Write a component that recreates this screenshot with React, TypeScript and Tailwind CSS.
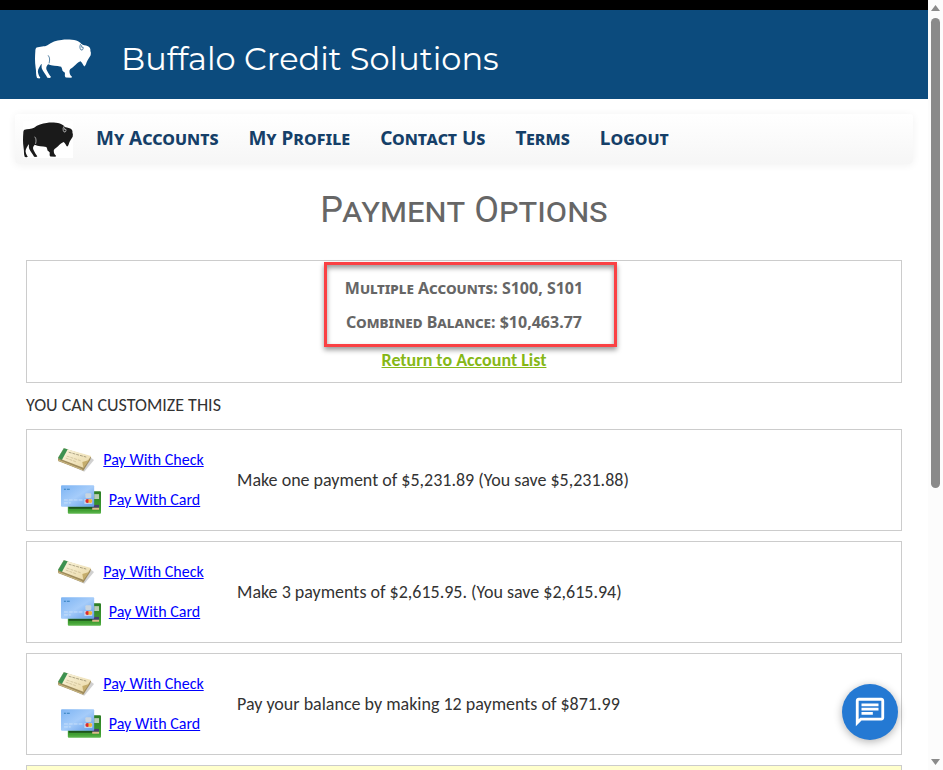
import React from 'react';

interface PaymentOption {
  id: number;
  description: string;
}

const navLinks = ['My Accounts', 'My Profile', 'Contact Us', 'Terms', 'Logout'];

const paymentOptions: PaymentOption[] = [
  { id: 1, description: 'Make one payment of $5,231.89 (You save $5,231.88)' },
  { id: 2, description: 'Make 3 payments of $2,615.95. (You save $2,615.94)' },
  { id: 3, description: 'Pay your balance by making 12 payments of $871.99' },
];

function Buffalo({ className, line }: { className: string; line: string }) {
  return (
    <svg viewBox="61 44 167 118" className={className} aria-hidden="true">
      <path
        fill="currentColor"
        d="M66 69C75 65 90 67 98 62C110 52 125 47 140 46C155 44 172 45 184 48C192 51 197 55 200 58C203 62 212 61 219 65C226 69 227 74 226 79C229 84 227 88 227 92C223 99 218 105 215 113C213 120 211 124 208 125C205 123 203 115 197 110C190 112 183 120 178 124C173 130 166 131 164 137C163 145 166 152 171 155L170 159L153 158C148 155 151 150 150 144C147 140 142 141 142 133L139 126C125 123 112 125 100 119C94 126 93 131 97 138C101 147 106 153 109 157L105 160L98 159C94 150 85 141 82 133C79 126 82 121 80 117C75 127 68 134 70 143C71 150 74 154 77 159L74 161L67 160C63 150 65 140 63 130C60 110 61 95 62 80C62 75 63 71 66 69Z"
      />
      <path d="M100 92C106 99 105 106 103 116" fill="none" stroke={line} strokeWidth="2" />
      <path d="M200 56C194 60 193 70 198 76C203 78 206 73 204 67C200 70 198 67 200 62" fill="none" stroke={line} strokeWidth="2" />
    </svg>
  );
}

function CheckIcon() {
  return (
    <svg width="38" height="26" viewBox="0 0 39 26" aria-hidden="true">
      <defs>
        <linearGradient id="paper" x1="0" y1="0" x2="1" y2="1">
          <stop offset="0" stopColor="#fcf7e2" />
          <stop offset="1" stopColor="#e9d7a4" />
        </linearGradient>
      </defs>
      <path d="M8 16L28 25L38 13L34 10Z" fill="#777" opacity="0.35" />
      <path d="M1 11L7 1L35 10L34 13L27 24L1 14Z" fill="#a08c5c" />
      <path d="M1 11L7 1L35 9L27 21Z" fill="url(#paper)" />
      <path d="M1 11L7 1L11 2L5 13Z" fill="#3d9150" />
      <path d="M1 13L26 23" stroke="#cdbb87" strokeWidth="1" />
      <path d="M27 21L26 15L33 13Z" fill="#c5ad6c" />
      <path d="M12 5L19 7L30 10" fill="none" stroke="#8b8263" strokeWidth="1" strokeDasharray="3 1" opacity="0.7" />
      <path d="M10 9L25 14M9 11L20 15" stroke="#b7a77b" strokeWidth="1" strokeDasharray="3 1" opacity="0.5" />
    </svg>
  );
}

function CardIcon() {
  return (
    <svg width="40" height="29" viewBox="0 0 41 29" aria-hidden="true">
      <defs>
        <linearGradient id="blueCard" x1="0" y1="0" x2="1" y2="1">
          <stop offset="0" stopColor="#7db4f3" />
          <stop offset="0.5" stopColor="#a5ccfa" />
          <stop offset="1" stopColor="#619be6" />
        </linearGradient>
        <linearGradient id="greenCard" x1="0" y1="0" x2="0" y2="1">
          <stop offset="0" stopColor="#2c7c25" />
          <stop offset="0.85" stopColor="#3f9e31" />
          <stop offset="1" stopColor="#5fb84f" />
        </linearGradient>
      </defs>
      <rect x="7" y="6" width="34" height="23" rx="1" fill="url(#greenCard)" />
      <rect x="8" y="22" width="25" height="2" fill="#1d551c" />
      <rect x="34" y="9" width="5" height="5" fill="#b9ccb2" />
      <rect x="32" y="20" width="7" height="3" fill="#47406f" />
      <rect x="32" y="23" width="7" height="2" fill="#dcb98b" />
      <rect x="0" y="0" width="34" height="22" rx="1" fill="url(#blueCard)" />
      <path d="M3 4H5M6 4H9" stroke="#2d7cba" strokeWidth="1" />
      <rect x="25" y="8" width="6" height="5" rx="1" fill="#c9d4de" />
      <path d="M3 15H23M3 18H10" stroke="#c9e0fb" strokeWidth="1" strokeDasharray="4 1" />
      <rect x="24" y="14" width="8" height="5" fill="#c9d9ee" />
      <circle cx="27" cy="16" r="2" fill="#dd2b2b" />
      <circle cx="30" cy="16" r="2" fill="#f3b63c" />
    </svg>
  );
}

function OptionRow({ option }: { option: PaymentOption }) {
  return (
    <li className="flex min-h-[102px] items-center border border-[#ccc] pb-px">
      <div className="flex w-[210px] shrink-0 flex-col items-center gap-2 pr-[3px] text-base text-[#0000ff]">
        <a href="#check" className="flex h-8 items-center gap-2">
          <CheckIcon />
          <span className="underline">Pay With Check</span>
        </a>
        <a href="#card" className="flex h-8 items-center gap-2">
          <CardIcon />
          <span className="underline">Pay With Card</span>
        </a>
      </div>
      <p>{option.description}</p>
    </li>
  );
}

function Scrollbar() {
  return (
    <div className="flex w-[15px] shrink-0 flex-col items-center bg-[#fcfcfc] py-[5px]" aria-hidden="true">
      <svg width="9" height="6" viewBox="0 0 9 6">
        <path d="M0 6L4.5 0L9 6Z" fill="#8a8a8a" />
      </svg>
      <div className="my-[7px] flex-1">
        <div className="h-[64%] w-[9px] rounded-full bg-[#8a8a8a]" />
      </div>
      <svg width="9" height="6" viewBox="0 0 9 6">
        <path d="M0 0L4.5 6L9 0Z" fill="#8a8a8a" />
      </svg>
    </div>
  );
}

function App() {
  return (
    <div className="flex h-screen overflow-hidden bg-white font-['Carlito','Calibri','Lato',sans-serif] text-lg text-[#333]">
      <div className="min-w-0 flex-1 overflow-hidden">
        {/* Site header */}
        <header className="flex h-[99px] items-center gap-[30px] border-t-[10px] border-black bg-[#0c4b7d] pl-[35px] pt-2 text-white">
          <Buffalo className="h-10 w-14" line="#0c4b7d" />
          <span className="font-['Montserrat','Inter',sans-serif] text-[32px]">Buffalo Credit Solutions</span>
        </header>

        {/* Navigation */}
        <nav className="mx-[15px] mt-[15px] flex h-[50px] items-center rounded bg-linear-to-b from-white to-[#f6f6f6] pl-2 shadow-[0_1px_8px_rgba(0,0,0,0.06)]">
          <a href="#home" aria-label="Home" className="mr-[23px] bg-white pt-px text-[#1a1a1a]">
            <Buffalo className="h-9 w-[50px]" line="#ffffff" />
          </a>
          <ul className="flex gap-[30px]">
            {navLinks.map((link) => (
              <li key={link}>
                <a href="#nav" className="font-['Noto_Sans',sans-serif] text-[19px] font-bold text-[#153f68] [font-variant:small-caps]">
                  {link}
                </a>
              </li>
            ))}
          </ul>
        </nav>

        <main className="px-[26px]">
          <h1 className="mt-[21px] mb-[25px] text-center font-['Roboto',sans-serif] text-4xl leading-[50px] text-[#666] [font-variant:small-caps]">
            Payment Options
          </h1>

          {/* Account summary */}
          <section className="relative h-[123px] border border-[#ccc] pt-[10px] text-center font-bold text-[#666]">
            <div className="font-['Noto_Sans',sans-serif] text-base leading-[34px] [font-variant:small-caps]">
              <p>Multiple Accounts: S100, S101</p>
              <p>Combined Balance: $10,463.77</p>
            </div>
            <a href="#accounts" className="leading-[43px] text-[#86b817] underline">
              Return to Account List
            </a>
            <div className="pointer-events-none absolute top-px left-1/2 -ml-[140px] h-[85px] w-[293px] border-[3px] border-[#fa4144] shadow-[0_3px_5px_rgba(0,0,0,0.4),inset_0_3px_5px_rgba(0,0,0,0.4)]" />
          </section>

          <p className="mt-[10px] mb-3 leading-6">YOU CAN CUSTOMIZE THIS</p>

          {/* Payment options */}
          <ul className="flex flex-col gap-[10px]">
            {paymentOptions.map((option) => (
              <OptionRow key={option.id} option={option} />
            ))}
            <li className="h-[102px] border border-[#ccc] bg-[#ffffcc]" />
          </ul>
        </main>
      </div>

      <Scrollbar />

      {/* Chat launcher */}
      <button
        type="button"
        aria-label="Open chat"
        className="fixed right-[45px] bottom-[30px] flex size-14 items-center justify-center rounded-full bg-[#2479d3] text-white shadow-[0_2px_8px_rgba(0,0,0,0.3)]"
      >
        <svg width="34" height="34" viewBox="0 0 24 24" fill="currentColor" aria-hidden="true">
          <path d="M4 4h16v12H5.17L4 17.17V4m0-2c-1.1 0-1.99.9-1.99 2L2 22l4-4h14c1.1 0 2-.9 2-2V4c0-1.1-.9-2-2-2H4zm2 10h8v2H6v-2zm0-3h12v2H6V9zm0-3h12v2H6V6z" />
        </svg>
      </button>
    </div>
  );
}

export default App;
